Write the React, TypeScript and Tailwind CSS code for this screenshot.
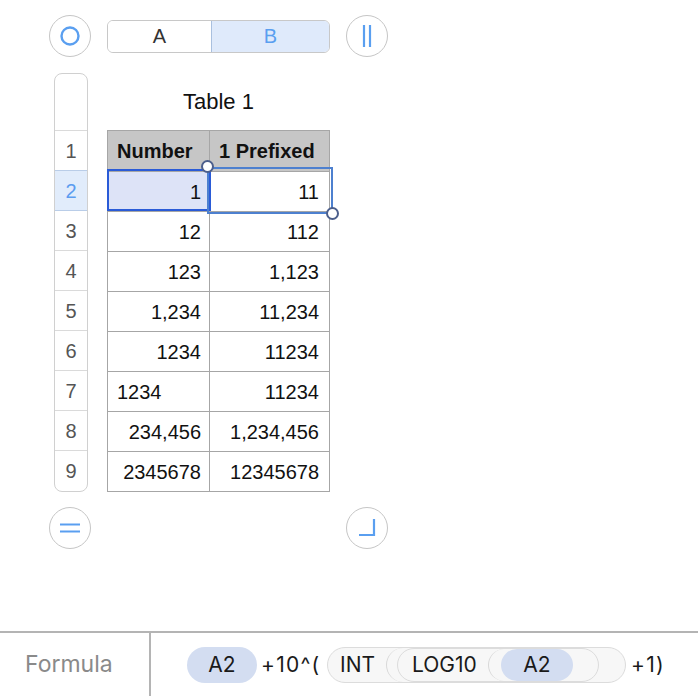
import React from "react";

const cellFont = { fontFamily: '"Liberation Sans", Arial, sans-serif' };

function CircleBtn({ children }: { children: React.ReactNode }) {
  return (
    <div className="w-[42px] h-[42px] rounded-full border-[1.5px] border-[#c6c6c6] bg-white flex items-center justify-center shrink-0">
      {children}
    </div>
  );
}

const rows: [string, string, boolean?][] = [
  ["1", "11"],
  ["12", "112"],
  ["123", "1,123"],
  ["1,234", "11,234"],
  ["1234", "11234"],
  ["1234", "11234", true],
  ["234,456", "1,234,456"],
  ["2345678", "12345678"],
];

export default function App() {
  return (
    <div className="w-[698px] h-[696px] bg-white flex flex-col overflow-hidden" style={cellFont}>
      <div className="flex-1 flex flex-col">
        {/* top controls */}
        <div className="flex items-center pl-[49px] pt-[15px] gap-[16px]">
          <CircleBtn>
            <svg width="22" height="22" viewBox="0 0 22 22">
              <circle cx="11" cy="11" r="8.5" fill="none" stroke="#5a9ff0" strokeWidth="2.4" />
            </svg>
          </CircleBtn>
          <div className="flex w-[223px] h-[33px] rounded-[6px] border border-[#c8c8c8] overflow-hidden">
            <div className="w-[103px] flex items-center justify-center text-[20px] text-[#333] bg-white">A</div>
            <div className="flex-1 flex items-center justify-center text-[20px] text-[#5a9ff0] bg-[#dfeafb] border-l border-[#a9c0df]">B</div>
          </div>
          <CircleBtn>
            <svg width="22" height="26" viewBox="0 0 22 26">
              <line x1="8" y1="2" x2="8" y2="24" stroke="#5a9ff0" strokeWidth="2.2" />
              <line x1="14" y1="2" x2="14" y2="24" stroke="#5a9ff0" strokeWidth="2.2" />
            </svg>
          </CircleBtn>
        </div>

        {/* table area */}
        <div className="flex pl-[54px] pt-[16px] gap-[19px]">
          <div className="w-[34px] flex flex-col rounded-[8px] border border-[#d0d0d0] overflow-hidden text-[20px] text-[#555] bg-white">
            <div className="h-[56px]" />
            {[1, 2, 3, 4, 5, 6, 7, 8, 9].map((n) => (
              <div
                key={n}
                className={
                  n === 2
                    ? "h-[40px] flex items-center justify-center border-t border-[#b9cde8] bg-[#e1ecfb] text-[#5b9cf0]"
                    : n === 3
                    ? "h-[40px] flex items-center justify-center border-t border-[#b9cde8]"
                    : "h-[40px] flex items-center justify-center border-t border-[#dadada]"
                }
              >
                {n}
              </div>
            ))}
          </div>

          <div className="w-[223px] flex flex-col">
            <div className="h-[57px] flex items-center justify-center text-[22px] text-[#111]">Table 1</div>
            <div className="relative">
              <div className="border border-[#a6a6a6] text-[20px] text-[#111]">
                <div className="flex h-[40px] bg-[#c6c6c6] font-bold">
                  <div className="w-[102px] flex items-center pl-[9px] border-r border-[#a6a6a6]">Number</div>
                  <div className="flex-1 flex items-center pl-[9px]">1 Prefixed</div>
                </div>
                {rows.map(([a, b, left], i) => (
                  <div key={i} className="flex h-[40px] border-t border-[#a6a6a6]">
                    <div
                      className={
                        i === 0
                          ? "w-[102px] flex items-center justify-end pr-[8px] bg-[#dde3f7] border-r border-[#a6a6a6]"
                          : left
                          ? "w-[102px] flex items-center justify-start pl-[9px] border-r border-[#a6a6a6]"
                          : "w-[102px] flex items-center justify-end pr-[8px] border-r border-[#a6a6a6]"
                      }
                    >
                      {a}
                    </div>
                    <div className="flex-1 flex items-center justify-end pr-[10px]">{b}</div>
                  </div>
                ))}
              </div>
              {/* A2 selection */}
              <div className="absolute left-0 top-[39px] w-[104px] h-[42px] border-2 border-[#2a5bd7]" />
              {/* B2 reference rectangle */}
              <div className="absolute left-[100px] top-[37px] w-[126px] h-[47px] border-2 border-[#4d80cf]" />
              <div className="absolute left-[94px] top-[30px] w-[13px] h-[13px] rounded-full bg-white border-2 border-[#4c5f8c]" />
              <div className="absolute left-[219px] top-[77px] w-[13px] h-[13px] rounded-full bg-white border-2 border-[#4c5f8c]" />
            </div>
          </div>
        </div>

        {/* bottom controls */}
        <div className="flex items-center pl-[49px] pt-[15px] gap-[255px]">
          <CircleBtn>
            <svg width="24" height="16" viewBox="0 0 24 16">
              <line x1="2" y1="4.5" x2="22" y2="4.5" stroke="#5a9ff0" strokeWidth="2" />
              <line x1="2" y1="11.5" x2="22" y2="11.5" stroke="#5a9ff0" strokeWidth="2" />
            </svg>
          </CircleBtn>
          <CircleBtn>
            <svg width="22" height="22" viewBox="0 0 22 22">
              <polyline points="3,18 18,18 18,2" fill="none" stroke="#5a9ff0" strokeWidth="2.2" />
            </svg>
          </CircleBtn>
        </div>
      </div>

      {/* formula bar */}
      <div className="h-[65px] border-t-2 border-[#b4b4b4] flex" style={{ fontFamily: 'Inter, "Liberation Sans", sans-serif' }}>
        <div className="w-[151px] flex items-center pl-[25px] text-[23px] text-[#8a8a8a] border-r-2 border-[#b4b4b4]">
          Formula
        </div>
        <div className="flex items-center pl-[36px] text-[21px] text-[#1a1a1a]">
          <div className="w-[70px] h-[36px] rounded-full bg-[#d3ddf1] flex items-center justify-center">A2</div>
          <span className="ml-[4px] w-[62px] tracking-[0.06em]">+10^(</span>
          <div className="ml-[4px] h-[36px] rounded-full border-[1.5px] border-[#dcdcdc] bg-[#f7f7f7] flex items-center pl-[12px] pr-[26px]">
            <span className="w-[36px]">INT</span>
            <div className="ml-[10px] h-[34px] rounded-l-full border-l-[1.5px] border-[#d8d8d8] flex items-center pl-[10px]">
              <div className="h-[34px] rounded-full border-[1.5px] border-[#dcdcdc] bg-[#f7f7f7] flex items-center pl-[14px] pr-[25px]">
                <span className="w-[66px]">LOG10</span>
                <div className="ml-[10px] h-[32px] rounded-l-full border-l-[1.5px] border-[#d8d8d8] flex items-center pl-[12px]">
                  <div className="w-[72px] h-[32px] rounded-full bg-[#d3ddf1] flex items-center justify-center">A2</div>
                </div>
              </div>
            </div>
          </div>
          <span className="ml-[5px] tracking-[0.06em]">+1)</span>
        </div>
      </div>
    </div>
  );
}
